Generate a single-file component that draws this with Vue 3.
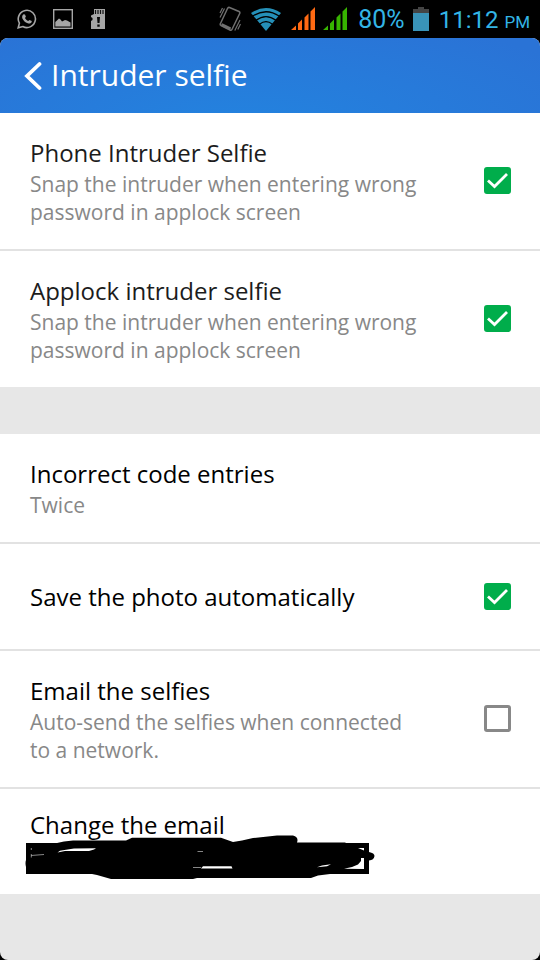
<script setup>
import { reactive } from 'vue'

const groups = reactive([
  [
    {
      id: 'phone',
      title: 'Phone Intruder Selfie',
      text: 'Snap the intruder when entering wrong password in applock screen',
      toggle: true,
      on: true,
      soft: true
    },
    {
      id: 'applock',
      title: 'Applock intruder selfie',
      text: 'Snap the intruder when entering wrong password in applock screen',
      toggle: true,
      on: true,
      soft: true
    }
  ],
  [
    { id: 'entries', title: 'Incorrect code entries', text: 'Twice' },
    { id: 'save', title: 'Save the photo automatically', toggle: true, on: true },
    {
      id: 'send',
      title: 'Email the selfies',
      text: 'Auto-send the selfies when connected to a network.',
      toggle: true,
      on: false
    },
    { id: 'email', title: 'Change the email', hidden: true }
  ]
])
</script>

<template>
  <div class="phone">
    <div class="status">
      <div class="notices">
        <svg width="20" height="20" viewBox="0 0 20 20">
          <path d="M1.2 18.8 2.4 14.2A8.6 8.6 0 1 1 5.8 17.500Z" fill="none" stroke="#a6a6a6" stroke-width="1.600" />
          <path d="M6.600 5.200 8 5.400 8.900 7.800 8 9.100C8.800 10.600 9.700 11.400 11.200 12.100L12.500 10.900 14.800 12 14.600 13.300C13.800 14.600 12.200 14.900 10.700 14.300 8.200 13.400 6.500 11.700 5.400 9.400 4.800 7.800 5.300 6 6.600 5.200Z" fill="#a6a6a6" />
        </svg>
        <svg width="20" height="20" viewBox="0 0 20 20">
          <rect x=".7" y=".7" width="18.600" height="18.600" fill="none" stroke="#a6a6a6" stroke-width="1.400" />
          <path d="M2.300 17.500V13L6 9.500 7.500 10.500 9 12.500 12 11 14 11.500 17.500 13.500V17.500Z" fill="#a6a6a6" />
        </svg>
        <svg width="14" height="20" viewBox="0 0 14 20">
          <path d="M3 0H14V20H0V12L1.500 11V9L0 8V6.500L3 5Z" fill="#a6a6a6" />
          <path d="M4.500 1V5M7 1V5M9.500 1V5M12 1V5" stroke="#111" stroke-width="1.200" />
          <path d="M6 8H9L8.500 14H6.500ZM6.300 15.500H8.700V17.800H6.300Z" fill="#080808" />
        </svg>
      </div>
      <div class="signals">
        <svg class="vibrate" width="22" height="26" viewBox="0 0 22 26">
          <g fill="none" stroke="#707070">
            <path d="M10.500 1.500 20 5.500Q21.300 6.200 20.700 7.500L13.200 23Q12.400 24.700 11 24L2 19.500Q.8 18.700 1.500 17.500L8.500 2.500Q9.200 1 10.500 1.500Z" stroke-width="1.500" />
            <path d="M2.500 18.500 11.500 22.800" stroke-width="3" />
            <path d="M1 7 3.500 2M1 11.500 5.500 2.500M18.800 23.500 21.500 18M15.800 24.500 21 14" stroke-width="1.200" />
          </g>
        </svg>
        <svg class="wifi" width="30" height="23" viewBox="0 0 30 23">
          <path d="M0 5Q15-5 30 5L15 23Z" fill="#2590b8" />
          <path d="M1.500 8.300Q15-.8 28.500 8.300M5 12.300Q15 5 25 12.300M8.500 16.200Q15 11 21.500 16.200" fill="none" stroke="#000" stroke-width="1.300" />
        </svg>
        <svg class="bars" width="24" height="24" viewBox="0 0 24 24" fill="#ff6a13">
          <path d="M0 23 5 18.500V23ZM7 23V16.500L11 12.500V23ZM13.500 23V10.500L17.500 6.500V23ZM19.500 23V4.500L24 0V23Z" />
        </svg>
        <svg class="bars second" width="24" height="24" viewBox="0 0 24 24" fill="#37b400">
          <path d="M0 23 5 18.500V23ZM7 23V16.500L11 12.500V23ZM13.500 23V10.500L17.500 6.500V23ZM19.500 23V4.500L24 0V23Z" />
        </svg>
        <span class="level">80%</span>
        <svg class="battery" width="16" height="24" viewBox="0 0 16 24">
          <path d="M5 0H11V2H16V6H0V2H5Z" fill="#444" />
          <path d="M0 6H16V24H0Z" fill="#3993b8" />
        </svg>
        <span class="time">11:12<small>PM</small></span>
      </div>
    </div>

    <div class="app">
      <header class="bar">
        <button class="back" type="button" aria-label="Back">
          <svg width="18" height="30" viewBox="0 0 18 30">
            <path d="M15.500 3 3 15 15.500 27" fill="none" stroke="#fff" stroke-width="3.800" stroke-linecap="round" stroke-linejoin="miter" />
          </svg>
        </button>
        <h1>Intruder selfie</h1>
      </header>

      <main>
        <section v-for="(group, g) in groups" :key="g" class="group">
          <component
            :is="row.toggle ? 'label' : 'div'"
            v-for="row in group"
            :key="row.id"
            class="row"
            :for="row.toggle ? row.id : null"
          >
            <span class="words">
              <span class="title" :class="{ soft: row.soft }">{{ row.title }}</span>
              <span v-if="row.text" class="text">{{ row.text }}</span>
              <svg v-if="row.hidden" class="scribble" width="345" height="32" viewBox="30 843 345 32">
                <path d="M26 843H57L64 841.500 73 840.500H126L132 837.700H221L233 842 242 840.500 253 838 277 835.500H293Q299 837 297 842.500L345 842.500 346 843H369V852Q374.500 853 374.500 856 374 860 369 860.500V874H330L318 875.500 311 878H197L193 879H111L97 875 92 874H26V867Q25 863 26 860Z" />
                <g fill="#fff">
                  <path d="M57.500 852.500 60 850.800 66 849.800 74 848.500 96 848.200 94 849.500 89 851H65Z" />
                  <path d="M201 868.500 203 866.300H231.500L232.500 868.500Z" />
                  <path d="M317 867.300 322 865.500 331 864.300 327 866.300Z" />
                  <path d="M344 868.800 352 867 358 864.500 361 861V858H364V869Z" />
                  <path d="M358 848H364V850.500Z" />
                </g>
                <path d="M31.300 848V850M31.300 854V857.500M31 855.500 44 854.500M197.500 851.500H203M193 867.500H201" fill="none" stroke="#aaa" stroke-width=".8" />
              </svg>
            </span>
            <span v-if="row.toggle" class="tick">
              <input :id="row.id" v-model="row.on" type="checkbox" />
              <svg v-if="row.on" width="27" height="27" viewBox="0 0 27 27">
                <path d="M4 13.500 10.500 19.500 23 7" fill="none" stroke="#fff" stroke-width="2.800" />
              </svg>
            </span>
          </component>
        </section>
      </main>
    </div>
  </div>
</template>

<style>
body {
  margin: 0;
  background: #000;
}
</style>

<style scoped>
.phone {
  display: flex;
  flex-direction: column;
  min-height: 100vh;
  font-family: "Open Sans", "Noto Sans", sans-serif;
}
svg {
  display: block;
  flex: none;
}
.status {
  display: flex;
  justify-content: space-between;
  align-items: center;
  height: 38px;
  padding: 0 10px 0 17px;
  color: #33b5e5;
  font-family: Roboto, sans-serif;
}
.notices {
  display: flex;
  gap: 16px;
}
.notices svg:last-child {
  margin-left: 2px;
}
.signals {
  display: flex;
  align-items: center;
}
.wifi {
  margin-left: 10px;
}
.bars {
  margin-left: 10px;
}
.second {
  margin-left: 8px;
}
.level {
  margin-left: 11px;
  padding-top: 2px;
  font-size: 25px;
  line-height: 36px;
}
.battery {
  margin: 0 10px 0 8px;
}
.time {
  display: flex;
  align-items: baseline;
  gap: 6px;
  padding-top: 4px;
  font-size: 24px;
  line-height: 34px;
}
.time small {
  font-size: 17px;
}
.app {
  flex: 1;
  overflow: hidden;
  border-radius: 8px;
  background: #e7e7e7;
}
.bar {
  display: flex;
  align-items: center;
  height: 75px;
  padding-left: 24px;
  background: radial-gradient(ellipse 70% 160% at 45% 120%, #2383df, #2a73d6);
  color: #fff;
}
.back {
  padding: 0;
  border: 0;
  background: none;
}
h1 {
  margin: 0 0 2px 9px;
  font-size: 30px;
  line-height: 40px;
  font-weight: 400;
}
.group + .group {
  margin-top: 47px;
}
.row {
  display: flex;
  align-items: center;
  justify-content: space-between;
  gap: 60px;
  box-sizing: border-box;
  min-height: 105px;
  padding: 19px 29px 19px 30px;
  background: #fff;
}
.row:has(.text) {
  padding-top: 23px;
  padding-bottom: 23px;
}
.row + .row {
  border-top: 2px solid #e2e2e2;
  min-height: 107px;
}
.words {
  display: flex;
  flex: 1;
  flex-direction: column;
}
.title {
  color: #000;
  font-size: 24px;
  line-height: 34px;
}
.soft {
  color: #1c1c1c;
}
.text {
  color: #888;
  font-size: 21px;
  line-height: 28px;
}
.scribble {
  margin-top: 1px;
  overflow: visible;
}
.tick {
  display: grid;
  padding-bottom: 1px;
}
.tick > * {
  grid-area: 1 / 1;
}
.tick svg {
  pointer-events: none;
}
input {
  appearance: none;
  box-sizing: border-box;
  width: 27px;
  height: 27px;
  margin: 0;
  border: 3px solid #888;
  border-radius: 3px;
  background: #fff;
}
input:checked {
  border-color: #00ad4b;
  background: #00ad4b;
}
</style>
